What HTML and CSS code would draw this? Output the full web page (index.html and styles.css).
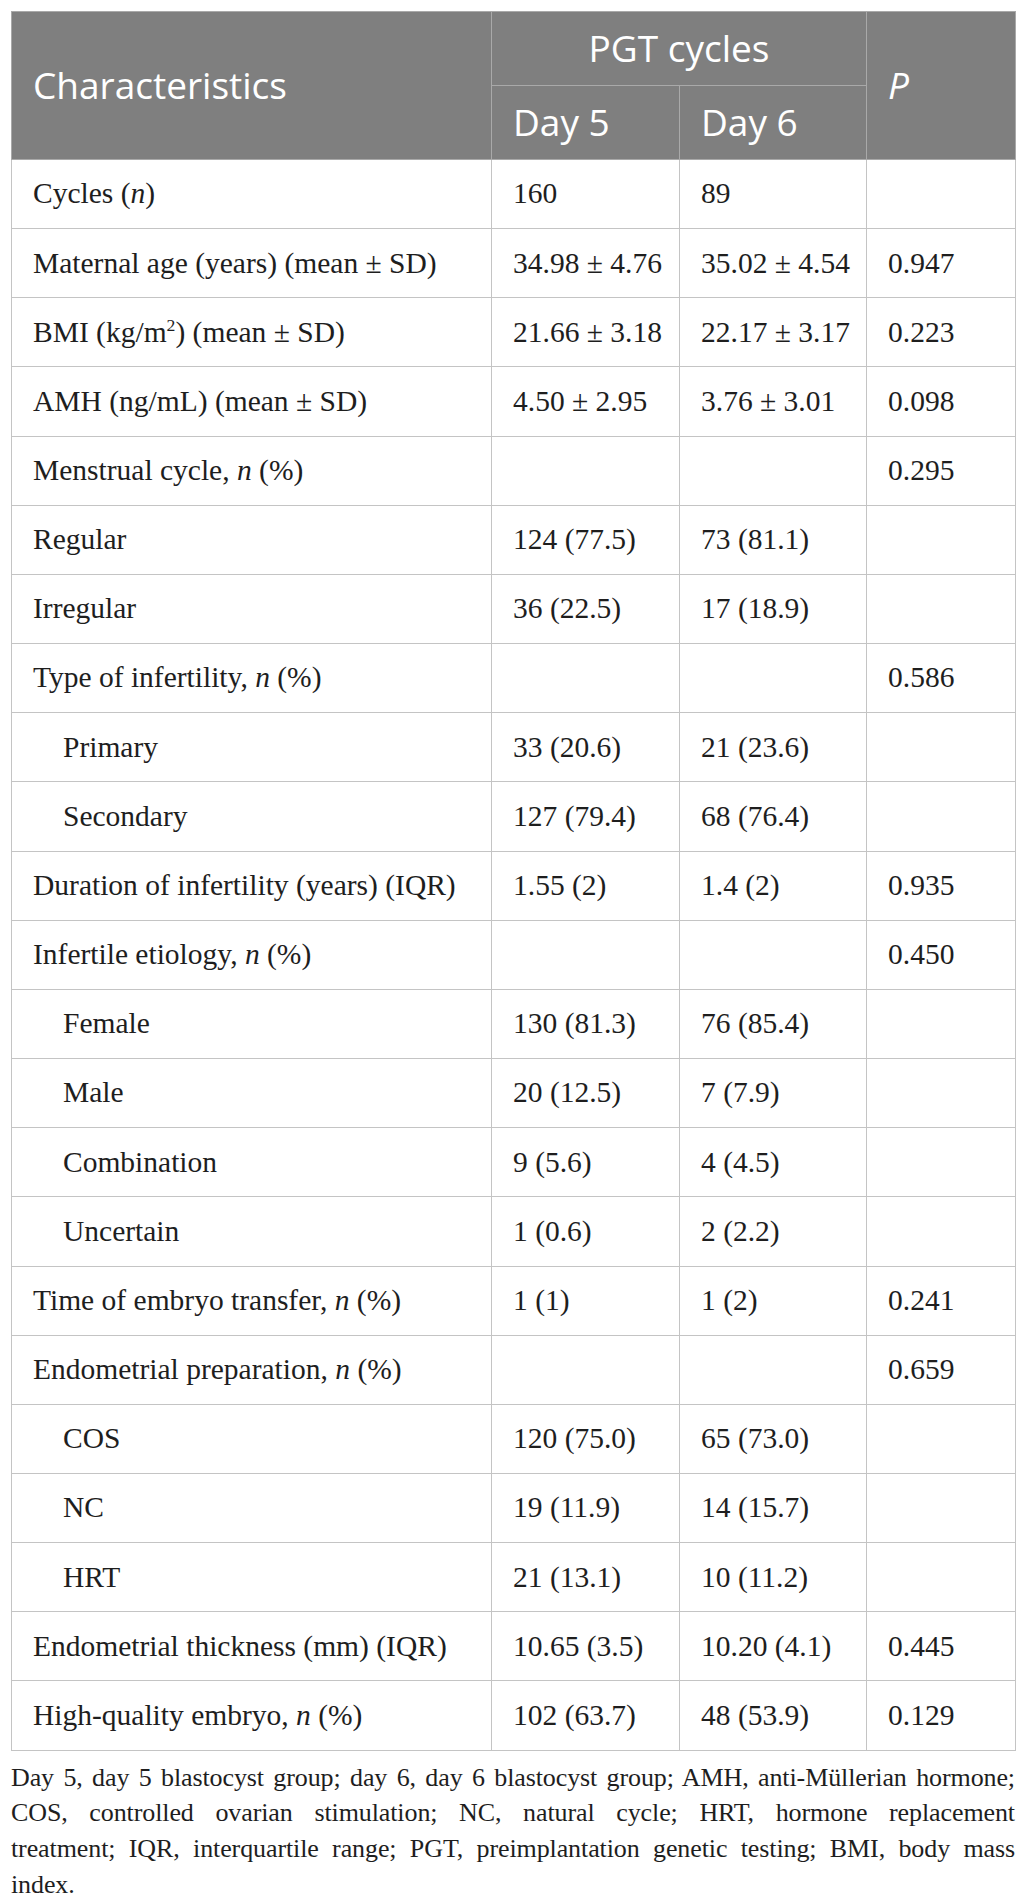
FILE: index.html
```html
<!DOCTYPE html>
<html lang="en">
<head>
<meta charset="utf-8">
<title>Table</title>
<link rel="stylesheet" href="styles.css">
</head>
<body>
<div class="wrap">
<table class="data">
<colgroup>
<col class="c1"><col class="c2"><col class="c3"><col class="c4">
</colgroup>
<thead>
<tr class="h1">
<th rowspan="2" class="left">Characteristics</th>
<th colspan="2" class="center">PGT cycles</th>
<th rowspan="2" class="left"><i>P</i></th>
</tr>
<tr class="h2">
<th class="left">Day 5</th>
<th class="left">Day 6</th>
</tr>
</thead>
<tbody>
<tr><td>Cycles (<i>n</i>)</td><td>160</td><td>89</td><td></td></tr>
<tr><td>Maternal age (years) (mean ± SD)</td><td>34.98 ± 4.76</td><td>35.02 ± 4.54</td><td>0.947</td></tr>
<tr><td>BMI (kg/m<sup>2</sup>) (mean ± SD)</td><td>21.66 ± 3.18</td><td>22.17 ± 3.17</td><td>0.223</td></tr>
<tr><td>AMH (ng/mL) (mean ± SD)</td><td>4.50 ± 2.95</td><td>3.76 ± 3.01</td><td>0.098</td></tr>
<tr><td>Menstrual cycle, <i>n</i> (%)</td><td></td><td></td><td>0.295</td></tr>
<tr><td>Regular</td><td>124 (77.5)</td><td>73 (81.1)</td><td></td></tr>
<tr><td>Irregular</td><td>36 (22.5)</td><td>17 (18.9)</td><td></td></tr>
<tr><td>Type of infertility, <i>n</i> (%)</td><td></td><td></td><td>0.586</td></tr>
<tr><td class="sub">Primary</td><td>33 (20.6)</td><td>21 (23.6)</td><td></td></tr>
<tr><td class="sub">Secondary</td><td>127 (79.4)</td><td>68 (76.4)</td><td></td></tr>
<tr><td>Duration of infertility (years) (IQR)</td><td>1.55 (2)</td><td>1.4 (2)</td><td>0.935</td></tr>
<tr><td>Infertile etiology, <i>n</i> (%)</td><td></td><td></td><td>0.450</td></tr>
<tr><td class="sub">Female</td><td>130 (81.3)</td><td>76 (85.4)</td><td></td></tr>
<tr><td class="sub">Male</td><td>20 (12.5)</td><td>7 (7.9)</td><td></td></tr>
<tr><td class="sub">Combination</td><td>9 (5.6)</td><td>4 (4.5)</td><td></td></tr>
<tr><td class="sub">Uncertain</td><td>1 (0.6)</td><td>2 (2.2)</td><td></td></tr>
<tr><td>Time of embryo transfer, <i>n</i> (%)</td><td>1 (1)</td><td>1 (2)</td><td>0.241</td></tr>
<tr><td>Endometrial preparation, <i>n</i> (%)</td><td></td><td></td><td>0.659</td></tr>
<tr><td class="sub">COS</td><td>120 (75.0)</td><td>65 (73.0)</td><td></td></tr>
<tr><td class="sub">NC</td><td>19 (11.9)</td><td>14 (15.7)</td><td></td></tr>
<tr><td class="sub">HRT</td><td>21 (13.1)</td><td>10 (11.2)</td><td></td></tr>
<tr><td>Endometrial thickness (mm) (IQR)</td><td>10.65 (3.5)</td><td>10.20 (4.1)</td><td>0.445</td></tr>
<tr><td>High-quality embryo, <i>n</i> (%)</td><td>102 (63.7)</td><td>48 (53.9)</td><td>0.129</td></tr>
</tbody>
</table>
<div class="note">
<span class="line">Day 5, day 5 blastocyst group; day 6, day 6 blastocyst group; AMH, anti-Müllerian hormone;</span>
<span class="line">COS, controlled ovarian stimulation; NC, natural cycle; HRT, hormone replacement</span>
<span class="line">treatment; IQR, interquartile range; PGT, preimplantation genetic testing; BMI, body mass</span>
<span class="last">index.</span>
</div>
</div>
</body>
</html>
```
FILE: styles.css
```css
html, body {
  margin: 0;
  padding: 0;
  background: #ffffff;
}
.wrap {
  padding: 11px 11px 0 11px;
  width: 1004px;
}
.data {
  width: 1004px;
  table-layout: fixed;
  border-collapse: collapse;
  font-family: "Liberation Serif", "Times New Roman", serif;
  font-size: 29.5px;
  color: #1e1e1e;
}
.c1 { width: 480px; }
.c2 { width: 188px; }
.c3 { width: 187px; }
.c4 { width: 149px; }
.data th {
  background: #7f7f7f;
  color: #ffffff;
  font-family: "Open Sans", "Noto Sans", sans-serif;
  font-weight: 400;
  font-size: 37px;
  border: 1px solid #a9a9a9;
  padding: 0 21px;
  vertical-align: middle;
  line-height: 1.2;
}
.data thead tr.h1 th { height: 73px; }
.data thead tr.h2 th { height: 73px; }
.data th.left { text-align: left; }
.data th.center { text-align: center; }
.data td {
  border: 1px solid #c4c4c4;
  padding: 0 21px;
  height: 68.17px;
  vertical-align: middle;
  line-height: 1.2;
  white-space: nowrap;
}
.data td.sub { padding-left: 51px; }
.data sup {
  font-size: 0.6em;
  line-height: 0;
  vertical-align: 0.65em;
}
.note {
  margin-top: 9px;
  font-family: "Liberation Serif", "Times New Roman", serif;
  font-size: 26px;
  line-height: 35.7px;
  color: #1e1e1e;
}
.note .line {
  display: block;
  text-align: justify;
  text-align-last: justify;
  letter-spacing: -0.1px;
}
.note .last {
  display: block;
  letter-spacing: -0.1px;
}
```
